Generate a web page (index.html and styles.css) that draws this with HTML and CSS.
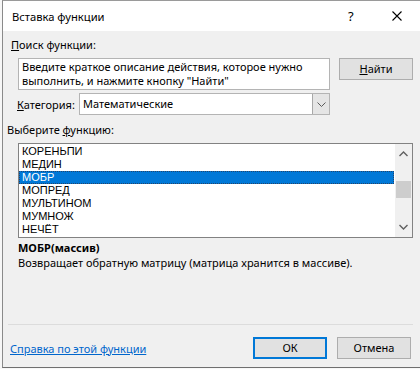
FILE: index.html
```html
<!DOCTYPE html>
<html lang="ru">
<head>
<meta charset="utf-8">
<link rel="stylesheet" href="styles.css">
</head>
<body>
<div class="backdrop">
  <div class="dialog">
    <div class="titlebar">
      <span class="title">Вставка функции</span>
      <span class="help">?</span>
      <svg class="close" width="10" height="10" viewBox="0 0 10 10"><path d="M0.5 0.5 L9.5 9.5 M9.5 0.5 L0.5 9.5" stroke="#000" stroke-width="1.1" fill="none"/></svg>
    </div>
    <div class="body">
      <div class="lbl lbl-search"><u>П</u>оиск функции:</div>
      <div class="search-row">
        <div class="search-box">Введите краткое описание действия, которое нужно<br>выполнить, и нажмите кнопку "Найти"</div>
        <div class="btn"><u>Н</u>айти</div>
      </div>
      <div class="cat-row">
        <span class="cat-label"><u>К</u>атегория:</span>
        <div class="select">
          <span class="select-text">Математические</span>
          <span class="select-arrow"><svg width="9" height="5" viewBox="0 0 9 5"><path d="M0.5 0.5 L4.5 4.5 L8.5 0.5" stroke="#5a5a5a" stroke-width="1" fill="none"/></svg></span>
        </div>
      </div>
      <div class="lbl lbl-choose">Выберите <u>ф</u>ункцию:</div>
      <div class="listbox">
        <ul class="items">
          <li>КОРЕНЬПИ</li>
          <li>МЕДИН</li>
          <li class="sel">МОБР</li>
          <li>МОПРЕД</li>
          <li>МУЛЬТИНОМ</li>
          <li>МУМНОЖ</li>
          <li>НЕЧЁТ</li>
        </ul>
        <div class="scrollbar">
          <svg class="sb-arrow" width="9" height="6" viewBox="0 0 9 6"><path d="M0.5 5 L4.5 1 L8.5 5" stroke="#606060" stroke-width="1.4" fill="none"/></svg>
          <div class="sb-track"><div class="sb-thumb"></div></div>
          <svg class="sb-arrow" width="9" height="6" viewBox="0 0 9 6"><path d="M0.5 1 L4.5 5 L8.5 1" stroke="#606060" stroke-width="1.4" fill="none"/></svg>
        </div>
      </div>
      <div class="sig">МОБР(массив)</div>
      <div class="desc">Возвращает обратную матрицу (матрица хранится в массиве).</div>
      <div class="sep"></div>
      <div class="footer">
        <a class="link" href="#">Справка по этой функции</a>
        <div class="btn btn-ok">ОК</div>
        <div class="btn">Отмена</div>
      </div>
    </div>
  </div>
</div>
</body>
</html>
```
FILE: styles.css
```css
html, body {
  margin: 0;
  padding: 0;
}
body {
  width: 420px;
  height: 369px;
  overflow: hidden;
  background: #f7f7f7;
  font-family: "Noto Sans", "Open Sans", sans-serif;
  font-size: 11px;
  color: #000;
}
.backdrop {
  padding-left: 2px;
  height: 369px;
  background: #f7f7f7;
}
.dialog {
  height: 366px;
  border-left: 1px solid #8a8a8a;
  border-top: 1px solid #9a9a9a;
  border-bottom: 1px solid #6f6f6f;
  background: #f0f0f0;
  overflow: hidden;
}
.titlebar {
  height: 30px;
  background: #fff;
  display: flex;
  align-items: center;
}
.title {
  margin-left: 9px;
  width: 336px;
  font-size: 11.2px;
}
.help {
  font-size: 13px;
  width: 44px;
}
.close {
  display: block;
  margin-top: -1px;
}
.body {
  padding-top: 6px;
}
.lbl {
  height: 16px;
  line-height: 16px;
}
.lbl-search {
  margin-left: 8px;
}
.search-row {
  display: flex;
  margin-top: 5px;
  margin-left: 15px;
}
.search-box {
  width: 304px;
  height: 28px;
  border: 1px solid #b4b4b4;
  background: #fff;
  padding: 1px 3px;
  line-height: 14px;
  white-space: nowrap;
  overflow: hidden;
}
.btn {
  width: 72px;
  height: 20px;
  line-height: 20px;
  border: 1px solid #adadad;
  background: #e1e1e1;
  text-align: center;
  margin-left: 9px;
  box-sizing: content-box;
}
.cat-row {
  display: flex;
  align-items: center;
  margin-top: 3px;
  margin-left: 14px;
  height: 22px;
}
.cat-label {
  width: 62px;
}
.select {
  width: 249px;
  height: 20px;
  border: 1px solid #b4b4b4;
  background: #fff;
  display: flex;
  align-items: stretch;
}
.select-text {
  flex: 1;
  line-height: 20px;
  padding-left: 3px;
}
.select-arrow {
  width: 16px;
  background: #e5e5e5;
  border-left: 1px solid #a8a8a8;
  display: flex;
  align-items: center;
  justify-content: center;
}
.lbl-choose {
  margin-top: 7px;
  margin-left: 4px;
}
.listbox {
  margin-top: 5px;
  margin-left: 15px;
  width: 393px;
  height: 93px;
  border: 1px solid #828282;
  background: #fff;
  display: flex;
}
.items {
  list-style: none;
  margin: 0;
  padding: 1px 0 0 0;
  flex: 1;
  font-family: "Liberation Sans", Arial, sans-serif;
  font-size: 11px;
}
.items li {
  height: 13px;
  line-height: 13px;
  padding-left: 3px;
  margin-right: 1px;
}
.items li.sel {
  background: #0078d7;
  color: #fff;
  outline: 1px dotted #24456b;
  outline-offset: -1px;
}
.scrollbar {
  width: 17px;
  background: #f0f0f0;
  display: flex;
  flex-direction: column;
  align-items: center;
}
.sb-arrow {
  display: block;
  margin: 7px 0 4px;
}
.sb-arrow:last-child {
  margin: 4px 0 7px;
}
.sb-track {
  flex: 1;
  width: 15px;
}
.sb-thumb {
  margin-top: 20px;
  height: 17px;
  background: #cdcdcd;
}
.sig {
  margin-top: 2px;
  margin-left: 15px;
  font-weight: bold;
  line-height: 15px;
}
.desc {
  margin-left: 15px;
  line-height: 15px;
}
.sep {
  margin-top: 54px;
  margin-left: 5px;
  width: 405px;
  height: 1px;
  background: #dcdcdc;
}
.footer {
  margin-top: 12px;
  display: flex;
  align-items: center;
}
.link {
  margin-left: 7px;
  width: 243px;
  color: #0066cc;
  text-decoration: underline;
}
.footer .btn {
  margin-left: 10px;
}
.footer .btn-ok {
  margin-left: 0;
  width: 70px;
  height: 18px;
  line-height: 18px;
  border: 2px solid #0078d7;
}
```
